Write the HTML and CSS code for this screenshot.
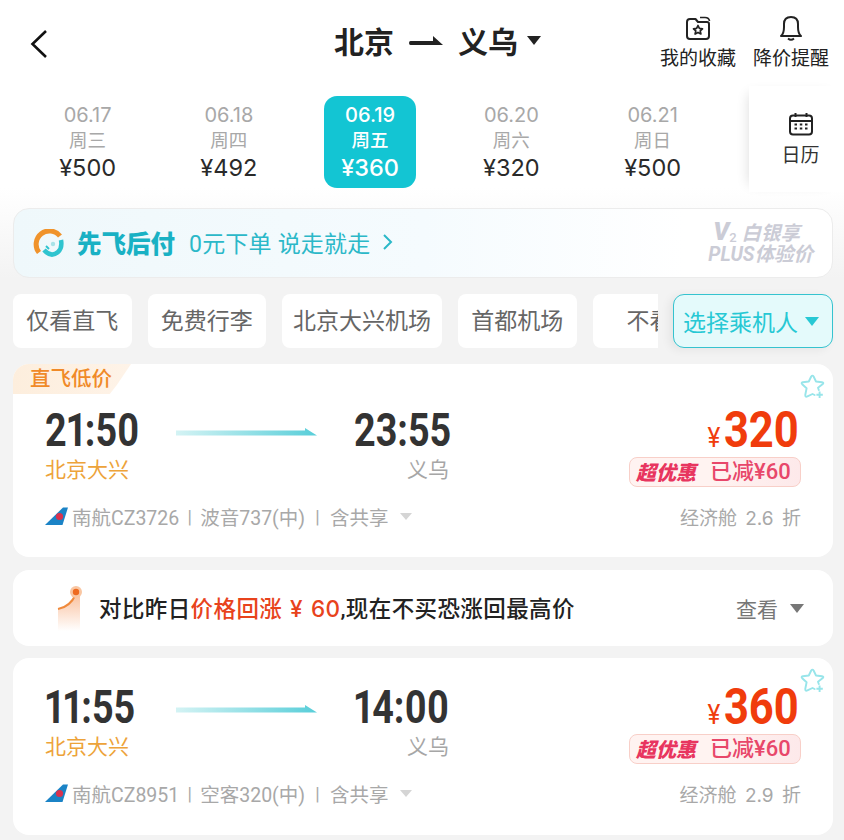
FILE: index.html
```html
<!DOCTYPE html>
<html lang="zh-CN">
<head>
<meta charset="utf-8">
<title>北京 - 义乌</title>
<link rel="stylesheet" href="styles.css">
</head>
<body>
<div class="page">
  <header class="header">
    <svg class="back" width="18" height="30" viewBox="0 0 18 30"><path d="M16 2 L2.5 15 L16 28" fill="none" stroke="#111" stroke-width="2.6"/></svg>
    <div class="title">
      <span>北京</span>
      <svg class="title-arrow" width="34" height="11" viewBox="0 0 34 11"><path d="M1.5 6 H24 V1 L34 10 H1.5 Q0 10 0 8 Q0 6 1.5 6 Z" fill="#222"/></svg>
      <span>义乌</span>
      <i class="caret caret-dark"></i>
    </div>
    <div class="actions">
      <div class="action">
        <svg width="26" height="26" viewBox="0 0 26 26"><path d="M2 7 V21 Q2 24 5 24 H21 Q24 24 24 21 V9 Q24 7 22 7 H13 L10.5 4 H5 Q2 4 2 7 Z" fill="none" stroke="#222" stroke-width="2" stroke-linejoin="round"/><path d="M15 2.5 H20 Q24 2.5 24.5 6" fill="none" stroke="#222" stroke-width="1.7"/><path d="M13 10.5 L14.4 13.4 L17.5 13.8 L15.2 15.9 L15.9 19 L13 17.4 L10.1 19 L10.8 15.9 L8.5 13.8 L11.6 13.4 Z" fill="none" stroke="#222" stroke-width="1.7" stroke-linejoin="round"/></svg>
        <span>我的收藏</span>
      </div>
      <div class="action">
        <svg width="26" height="26" viewBox="0 0 26 26"><path d="M3 21 Q6 18.5 6 12 V9 Q6 2 13 2 Q20 2 20 9 V12 Q20 18.5 23 21 Z" fill="none" stroke="#222" stroke-width="2" stroke-linejoin="round"/><path d="M10 23.5 Q13 26 16 23.5" fill="none" stroke="#222" stroke-width="2"/></svg>
        <span>降价提醒</span>
      </div>
    </div>
  </header>

  <section class="dates">
    <div class="date-list">
      <div class="date"><b>06.17</b><u>周三</u><em>¥500</em></div>
      <div class="date"><b>06.18</b><u>周四</u><em>¥492</em></div>
      <div class="date date-active"><b>06.19</b><u>周五</u><em>¥360</em></div>
      <div class="date"><b>06.20</b><u>周六</u><em>¥320</em></div>
      <div class="date"><b>06.21</b><u>周日</u><em>¥500</em></div>
    </div>
    <div class="calendar">
      <svg width="26" height="24" viewBox="0 0 26 24"><rect x="2" y="3.5" width="22" height="19" rx="3" fill="none" stroke="#222" stroke-width="2"/><path d="M2 9 H24 M7.5 1 V5 M18.5 1 V5" stroke="#222" stroke-width="2"/><path d="M6.5 12.5 H9 M11.8 12.5 H14.3 M17 12.5 H19.5 M6.5 16.5 H9 M11.8 16.5 H14.3 M17 16.5 H19.5" stroke="#222" stroke-width="2"/></svg>
      <span>日历</span>
    </div>
  </section>

  <main class="main">
    <div class="banner">
      <svg class="banner-logo" width="32" height="30" viewBox="0 0 32 30">
        <path d="M6 23.5 A13 13 0 0 1 27 7" fill="none" stroke="#f0932b" stroke-width="5"/>
        <path d="M11 21 Q18 29 25 23 Q29.5 19 28 11" fill="none" stroke="#2fc4cf" stroke-width="4.5"/>
        <circle cx="20" cy="15" r="2.2" fill="#a9e3e8"/>
        <path d="M13 17 L16 20" stroke="#2fc4cf" stroke-width="2"/>
      </svg>
      <strong class="banner-title">先飞后付</strong>
      <span class="banner-text">0元下单 说走就走</span>
      <svg class="banner-chev" width="11" height="18" viewBox="0 0 11 18"><path d="M2 2 L9 9 L2 16" fill="none" stroke="#2bb8c8" stroke-width="2"/></svg>
      <div class="banner-side">
        <div class="side-first"><span class="v-mark">V</span><sub>2</sub> 白银享</div>
        <div>PLUS体验价</div>
      </div>
    </div>

    <div class="filters">
      <div class="chips">
        <span class="chip">仅看直飞</span>
        <span class="chip">免费行李</span>
        <span class="chip">北京大兴机场</span>
        <span class="chip">首都机场</span>
        <span class="chip chip-cut">不看</span>
      </div>
      <div class="passenger">选择乘机人<i class="caret caret-teal"></i></div>
    </div>

    <article class="card card-tagged">
      <div class="tag">直飞低价</div>
      <svg class="fav" width="26" height="26" viewBox="0 0 26 26"><path d="M18.8 16 L18 13.8 L22.8 10 Q24.2 8.6 22 8.2 L16 7.5 L13.6 2.5 Q12.5 0.8 11.2 2.5 L8.8 7.5 L2.8 8.2 Q0.8 8.7 2.2 10.2 L6.6 14.3 L5.3 20.8 Q5 23.4 7.4 22.4 L12.5 20 L14.6 21" fill="none" stroke="#98e5ea" stroke-width="1.9" stroke-linejoin="round" stroke-linecap="round"/><path d="M19.6 17.5 V24 M16.4 20.8 H22.8" stroke="#98e5ea" stroke-width="1.9"/></svg>
      <div class="row">
        <div class="times">
          <span class="time time-dep">21:50</span>
          <svg class="flight-arrow" width="141" height="10" viewBox="0 0 141 10"><defs><linearGradient id="fa1"><stop offset="0" stop-color="#d4f3f4"/><stop offset="1" stop-color="#58ced9"/></linearGradient></defs><path d="M0 3.5 H129 V1 L141 8.5 H0 Z" fill="url(#fa1)"/></svg>
          <span class="time time-arr">23:55</span>
        </div>
        <div class="price"><small>¥</small>320</div>
      </div>
      <div class="row row-mid">
        <div class="places"><span class="dep-place">北京大兴</span><span class="arr-place">义乌</span></div>
        <div class="deal"><span class="deal-name">超优惠</span><span class="deal-off">已减¥60</span></div>
      </div>
      <div class="row row-low">
        <div class="meta">
          <svg class="tail" width="23" height="18" viewBox="0 0 23 18"><path d="M0 18 L18 0.5 H23 L17.5 18 Z" fill="#1b83c6"/><circle cx="14.5" cy="9.5" r="3.6" fill="#d9324e"/></svg>
          <span>南航CZ3726</span><span class="sep">|</span><span>波音737(中)</span><span class="sep sep-wide">|</span><span>含共享</span>
          <i class="caret caret-pale"></i>
        </div>
        <div class="cabin">经济舱 2.6 折</div>
      </div>
    </article>

    <div class="promo">
      <svg class="promo-icon" width="28" height="48" viewBox="0 0 28 48"><defs><linearGradient id="pg" x1="0" y1="0" x2="0" y2="1"><stop offset="0" stop-color="#f58b4a" stop-opacity=".55"/><stop offset="1" stop-color="#f58b4a" stop-opacity="0"/></linearGradient></defs><path d="M2 24 Q14 22 20 8 L24 10 V46 H2 Z" fill="url(#pg)"/><path d="M2 24 Q14 22 20 9" fill="none" stroke="#f08a3c" stroke-width="2"/><circle cx="20" cy="7" r="6" fill="#f9c6a2"/><circle cx="20" cy="7" r="3.2" fill="#ee6a1f"/></svg>
      <span class="promo-text">对比昨日<span class="promo-hot">价格回涨 ¥ 60</span>,现在不买恐涨回最高价</span>
      <span class="promo-view">查看</span>
      <i class="caret caret-grey"></i>
    </div>

    <article class="card">
      <svg class="fav" width="26" height="26" viewBox="0 0 26 26"><path d="M18.8 16 L18 13.8 L22.8 10 Q24.2 8.6 22 8.2 L16 7.5 L13.6 2.5 Q12.5 0.8 11.2 2.5 L8.8 7.5 L2.8 8.2 Q0.8 8.7 2.2 10.2 L6.6 14.3 L5.3 20.8 Q5 23.4 7.4 22.4 L12.5 20 L14.6 21" fill="none" stroke="#98e5ea" stroke-width="1.9" stroke-linejoin="round" stroke-linecap="round"/><path d="M19.6 17.5 V24 M16.4 20.8 H22.8" stroke="#98e5ea" stroke-width="1.9"/></svg>
      <div class="row">
        <div class="times">
          <span class="time time-dep">11:55</span>
          <svg class="flight-arrow" width="141" height="10" viewBox="0 0 141 10"><defs><linearGradient id="fa2"><stop offset="0" stop-color="#d4f3f4"/><stop offset="1" stop-color="#58ced9"/></linearGradient></defs><path d="M0 3.5 H129 V1 L141 8.5 H0 Z" fill="url(#fa2)"/></svg>
          <span class="time time-arr">14:00</span>
        </div>
        <div class="price"><small>¥</small>360</div>
      </div>
      <div class="row row-mid">
        <div class="places"><span class="dep-place">北京大兴</span><span class="arr-place">义乌</span></div>
        <div class="deal"><span class="deal-name">超优惠</span><span class="deal-off">已减¥60</span></div>
      </div>
      <div class="row row-low">
        <div class="meta">
          <svg class="tail" width="23" height="18" viewBox="0 0 23 18"><path d="M0 18 L18 0.5 H23 L17.5 18 Z" fill="#1b83c6"/><circle cx="14.5" cy="9.5" r="3.6" fill="#d9324e"/></svg>
          <span>南航CZ8951</span><span class="sep">|</span><span>空客320(中)</span><span class="sep sep-wide">|</span><span>含共享</span>
          <i class="caret caret-pale"></i>
        </div>
        <div class="cabin">经济舱 2.9 折</div>
      </div>
    </article>
  </main>
</div>
</body>
</html>
```
FILE: styles.css
```css
* { box-sizing: border-box; }
html, body { margin: 0; padding: 0; background: #f3f3f3; }
body {
  font-family: "Roboto", "Noto Sans CJK SC", sans-serif;
  color: #222;
  width: 844px;
  height: 840px;
  overflow: hidden;
}
.page { width: 844px; height: 840px; overflow: hidden; }

.caret {
  display: inline-block;
  width: 0;
  height: 0;
  border-left: 7px solid transparent;
  border-right: 7px solid transparent;
  border-top: 9px solid #222;
}
.caret-teal { border-top-color: #27c8d4; margin-left: 7px; }
.caret-pale { border-left-width: 6px; border-right-width: 6px; border-top: 7px solid #d5d5d5; margin-left: 11px; }
.caret-grey { border-top-color: #777; margin-left: 12px; }

/* header */
.header {
  height: 96px;
  background: #fff;
  display: flex;
  align-items: flex-start;
  padding-left: 30px;
}
.back { margin-top: 29px; }
.title {
  display: flex;
  align-items: center;
  margin-left: 286px;
  margin-top: 20px;
  font-size: 30px;
  line-height: 40px;
  font-weight: 700;
  font-family: "Noto Sans CJK SC", sans-serif;
  color: #222;
}
.title-arrow { margin: 0 15px 0 15px; }
.title .caret { margin-left: 9px; margin-top: 0; }
.actions {
  margin-left: auto;
  padding: 15px 15px 0 0;
  display: flex;
  gap: 17px;
}
.action {
  width: 76px;
  display: flex;
  flex-direction: column;
  align-items: center;
  font-size: 19px;
  line-height: 32px;
  color: #222;
  white-space: nowrap;
  font-family: "Noto Sans CJK SC", sans-serif;
}

/* dates */
.dates {
  height: 92px;
  background: #fff;
  display: flex;
  justify-content: space-between;
}
.date-list {
  padding-left: 17px;
  display: grid;
  grid-template-columns: repeat(5, 141.25px);
}
.date {
  width: 92px;
  justify-self: center;
  padding-top: 6px;
  display: flex;
  flex-direction: column;
  align-items: center;
  border-radius: 13px;
  font-family: "Inter", "Noto Sans CJK SC", sans-serif;
  font-size: 20px;
  line-height: 26px;
  color: #a8a8a8;
}
.date b { font-weight: 400; }
.date u { text-decoration: none; font-size: 18.5px; line-height: 25px; }
.date em { font-style: normal; font-size: 23.5px; line-height: 28px; margin-top: 1px; color: #2a2a2a; }
.date-active { background: #13c5d3; color: #fff; }
.date-active b, .date-active u { font-weight: 500; }
.date-active em { color: #fff; font-weight: 500; }
.calendar {
  width: 95px;
  height: 106px;
  margin-top: -10px;
  padding: 26px 0 0 8px;
  background: #fff;
  box-shadow: -8px 0 12px -8px rgba(0, 0, 0, 0.14);
  display: flex;
  flex-direction: column;
  align-items: center;
  font-size: 19px;
  line-height: 40px;
  position: relative;
}
.calendar span { color: #333; }

/* main */
.main {
  padding: 20px 11px 0 13px;
  background: linear-gradient(#fff 0, #f3f3f3 90px);
}

.banner {
  height: 70px;
  border: 1px solid #ececec;
  border-radius: 16px;
  background: linear-gradient(90deg, #eff8fb 0, #f5fbfe 50%, #fff 82%);
  display: flex;
  align-items: center;
  padding: 0 19px;
}
.banner-logo { margin-right: 12px; margin-top: 2px; }
.banner-title {
  font-size: 24.5px;
  font-weight: 900;
  color: #19b1c4;
  margin-top: -2px;
  font-family: "Noto Sans CJK SC", sans-serif;
}
.banner-text {
  font-size: 23px;
  letter-spacing: 0.2px;
  color: #2bb8c8;
  margin: -2px 0 0 14px;
  white-space: nowrap;
}
.banner-chev { margin-left: 12px; margin-top: -2px; }
.banner-side {
  margin-left: auto;
  text-align: right;
  font-size: 19.5px;
  line-height: 23px;
  font-weight: 700;
  font-style: italic;
  color: #cbccd6;
  white-space: nowrap;
}
.side-first { padding-right: 13px; height: 23px; }
.banner-side sub { font-size: 13px; line-height: 0; font-style: normal; font-weight: 500; vertical-align: -2px; }
.v-mark { font-size: 25px; line-height: 23px; font-weight: 900; }

/* filters */
.filters {
  margin-top: 16px;
  height: 54px;
  display: flex;
  justify-content: space-between;
}
.chips {
  width: 645px;
  display: flex;
  gap: 16px;
  overflow: hidden;
}
.chip {
  flex: none;
  height: 54px;
  min-width: 118.5px;
  padding: 2px 11px 0;
  border-radius: 8px;
  background: #fff;
  font-size: 23px;
  line-height: 52px;
  text-align: center;
  color: #666;
  white-space: nowrap;
}
.chip-cut { padding-left: 34px; text-align: left; }
.passenger {
  width: 160px;
  height: 54px;
  border: 1.5px solid #35c3cf;
  border-radius: 11px;
  background: #e4fafb;
  box-shadow: -4px 2px 10px rgba(0, 0, 0, 0.06);
  display: flex;
  align-items: center;
  padding-left: 9px;
  font-size: 23px;
  color: #27c8d4;
  white-space: nowrap;
}

/* cards */
.card {
  position: relative;
  margin-top: 12px;
  background: #fff;
  border-radius: 16px;
  padding: 24px 32px 27px;
}
.card-tagged { margin-top: 16px; padding-top: 0; padding-bottom: 26px; }
.tag {
  width: 118px;
  height: 30px;
  margin: 0 0 11px -32px;
  padding: 1px 0 0 17px;
  background: linear-gradient(90deg, #fdeedd, #fef3e8);
  clip-path: polygon(0 0, 100% 0, 88% 70%, 82% 100%, 0 100%);
  border-top-left-radius: 16px;
  font-size: 20.5px;
  line-height: 29px;
  font-weight: 500;
  color: #f08a28;
  white-space: nowrap;
}
.fav { position: absolute; top: 10px; right: 7px; }

.row { display: flex; justify-content: space-between; }
.row-mid { height: 32px; }
.row-low { margin-top: 14px; height: 30px; align-items: center; }

.times { display: flex; align-items: center; height: 50px; }
.time {
  font-size: 46px;
  font-weight: 700;
  line-height: 50px;
  color: #333;
  font-feature-settings: "pnum";
  transform: scaleX(0.82);
  transform-origin: left center;
  white-space: nowrap;
}
.time-dep { width: 131px; }
.time-arr { width: 97px; margin-left: 38px; }
.flight-arrow { flex: none; margin-top: 3px; width: 141px; margin-right: -1px; }

.price {
  height: 50px;
  font-size: 50px;
  line-height: 50px;
  font-weight: 700;
  color: #f03c0c;
  display: flex;
  align-items: baseline;
  margin-right: 2px;
  transform: scaleX(0.87);
  transform-origin: right center;
}
.price small { font-size: 28px; line-height: 38px; margin-right: 4px; font-weight: 400; }

.places { display: flex; font-size: 21px; line-height: 30px; }
.dep-place { width: 362px; color: #eda33a; }
.arr-place { color: #a6a6a6; }

.deal {
  width: 172px;
  height: 30px;
  margin-top: 2px;
  border: 1px solid #f8cfc8;
  border-radius: 8px;
  background: linear-gradient(90deg, #fff3f1 0, #fff3f1 48%, #fde9ea 100%);
  display: flex;
  align-items: center;
  white-space: nowrap;
}
.deal-name {
  width: 80px;
  padding-left: 6px;
  font-size: 20px;
  line-height: 28px;
  font-weight: 900;
  font-style: italic;
  color: #e8355f;
  font-family: "Noto Sans CJK SC", sans-serif;
}
.deal-off { font-size: 22px; line-height: 28px; color: #e8476a; font-weight: 500; }

.meta { display: flex; align-items: center; font-size: 19.5px; color: #a8a8a8; white-space: nowrap; }
.tail { margin-right: 4px; }
.sep { width: 21px; text-align: center; font-size: 18px; }
.sep-wide { width: 25px; }
.cabin { font-family: "Inter", "Noto Sans CJK SC", sans-serif; font-size: 19px; word-spacing: 3px; color: #a8a8a8; white-space: nowrap; }

/* promo */
.promo {
  margin-top: 13px;
  height: 76px;
  background: #fff;
  border-radius: 16px;
  display: flex;
  align-items: center;
  padding-left: 43px;
}
.promo-icon { margin-top: 1px; }
.promo-text {
  margin: -2px 0 0 15px;
  font-size: 22.5px;
  letter-spacing: 0.4px;
  font-weight: 500;
  color: #222;
  white-space: nowrap;
}
.promo-hot { color: #e8431c; font-family: "Inter", "Noto Sans CJK SC", sans-serif; word-spacing: 1.5px; }
.promo-view { margin-left: auto; font-size: 21px; color: #777; }
.promo .caret { margin-right: 29px; }
```
